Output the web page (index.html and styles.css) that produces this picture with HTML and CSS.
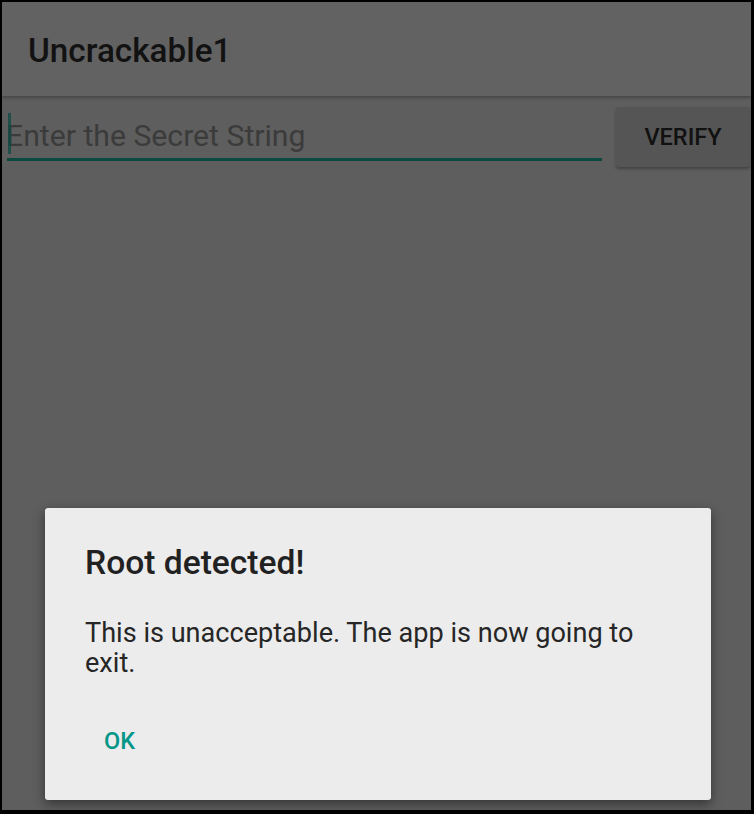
FILE: index.html
```html
<!DOCTYPE html>
<html>
<head>
<meta charset="utf-8">
<link rel="stylesheet" href="styles.css">
</head>
<body>
<div class="screen">
  <header class="appbar"><h1 class="title">Uncrackable1</h1></header>
  <main class="content">
    <div class="field">
      <span class="cursor"></span>
      <span class="placeholder">Enter the Secret String</span>
    </div>
    <div class="btn">VERIFY</div>
  </main>
  <div class="dialog">
    <h2 class="dtitle">Root detected!</h2>
    <p class="dmsg">This is unacceptable. The app is now going to exit.</p>
    <div class="dactions"><span class="ok">OK</span></div>
  </div>
</div>
</body>
</html>
```
FILE: styles.css
```css
html, body { margin: 0; padding: 0; }
body {
  background: #000;
  padding: 2px 3px 4px 2px;
  width: 749px;
  height: 808px;
  font-family: Roboto, "Noto Sans", sans-serif;
}
.screen {
  position: relative;
  width: 749px;
  height: 808px;
  background: #5e5e5e;
  overflow: hidden;
  display: flex;
  flex-direction: column;
}
.appbar {
  height: 94px;
  background: #626262;
  box-shadow: 0 2px 3px rgba(0,0,0,0.25);
  display: flex;
  align-items: center;
  padding: 2px 0 0 26px;
  box-sizing: border-box;
  position: relative;
  z-index: 1;
}
.title {
  margin: 0;
  font-size: 33.3px;
  font-weight: 500;
  color: #121212;
}
.content {
  display: flex;
  align-items: flex-start;
  padding: 11px 0 0 5px;
  gap: 14px;
}
.field {
  width: 595px;
  height: 51px;
  box-sizing: content-box;
  border-bottom: 3px solid #0c4a41;
  display: flex;
  align-items: center;
  position: relative;
}
.cursor {
  position: absolute;
  left: 1px;
  top: 6px;
  width: 3px;
  height: 41px;
  background: rgba(12, 74, 65, 0.75);
}
.placeholder {
  font-size: 30.2px;
  line-height: 35px;
  color: #3b3b3b;
  padding-top: 6px;
  margin-left: -1px;
}
.btn {
  width: 134px;
  height: 60px;
  background: #555555;
  border-radius: 3px;
  box-shadow: 0 2px 3px rgba(0,0,0,0.3);
  display: flex;
  align-items: center;
  justify-content: center;
  font-size: 23.5px;
  font-weight: 500;
  color: #111;
}
.dialog {
  position: absolute;
  left: 43px;
  top: 506px;
  width: 666px;
  height: 292px;
  box-sizing: border-box;
  background: #ececec;
  border-radius: 3px;
  box-shadow: 0 4px 12px rgba(0,0,0,0.45);
  padding: 35px 40px 0 40px;
}
.dtitle {
  margin: 0;
  font-size: 33.6px;
  font-weight: 500;
  color: #212121;
  line-height: 40px;
}
.dmsg {
  margin: 35px 0 0;
  font-size: 27.1px;
  line-height: 30px;
  color: #262626;
}
.dactions {
  margin-top: 49px;
  padding-left: 19px;
  line-height: 28px;
}
.ok {
  font-size: 23.5px;
  font-weight: 500;
  color: #009688;
}
```
